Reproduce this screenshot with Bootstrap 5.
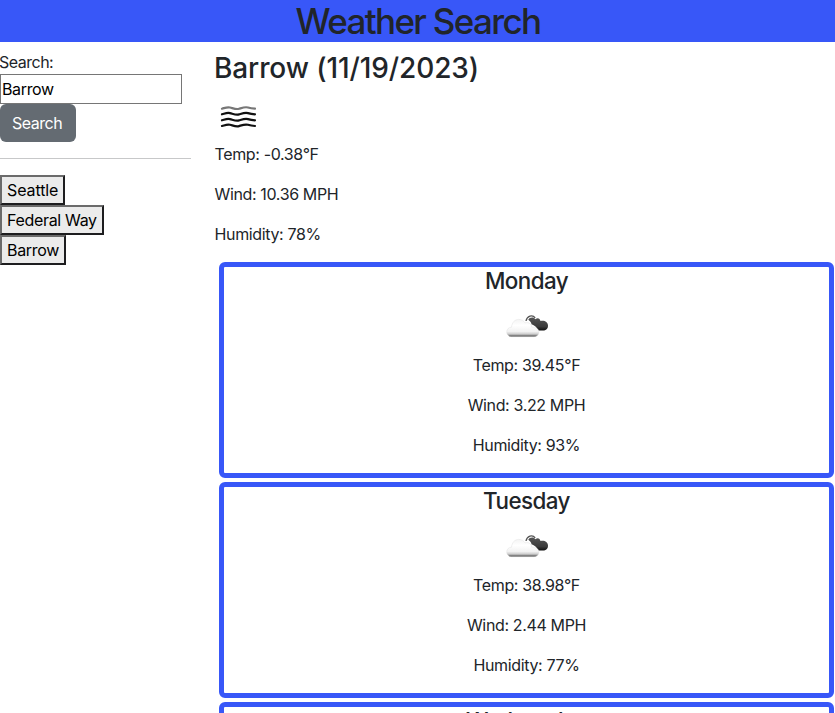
<!DOCTYPE html>
<html lang="en">
<head>
<meta charset="utf-8">
<meta name="viewport" content="width=device-width, initial-scale=1">
<title>Weather Search</title>
<link href="https://cdn.jsdelivr.net/npm/bootstrap@5.3.0/dist/css/bootstrap.min.css" rel="stylesheet">
<style>
body{font-family:Inter,"Liberation Sans",sans-serif;letter-spacing:-.36px;height:713px}
.page-head{background:#3857f8;height:42px}
.page-head h1{font-size:35px;line-height:43px;letter-spacing:-1.65px;padding-left:1px}
.side-panel{width:191px}
.side-panel label{text-indent:-1px;letter-spacing:-.5px}
.search-box{width:182px;height:30px;border:1px solid #767676;padding:1px 2px 1px 1px;color:#000;letter-spacing:-.36px}
.btn-search{width:76px;height:38px;background:#646b72;color:#fff;letter-spacing:-.5px;padding:6px 13px 6px 11px}
.btn-search:hover{background:#565e64;color:#fff}
.side-panel hr{opacity:.25}
.city-btn{height:30px;border:2px solid;border-color:#6b6b6b #1d1d1f #1d1d1f #6b6b6b;background:#ebebeb;color:#000;padding:0 5px;letter-spacing:-.33px}
.city-btn.seattle{letter-spacing:-.1px}
.main-panel{margin-left:24px}
.main-panel h2{font-size:28px;line-height:36px;letter-spacing:-.1px;margin-bottom:6px;text-indent:-1px}
.now-icon{width:50px;height:50px}
.now-data p{text-indent:-.5px}
.day-card{border:5px solid #3857f8;border-radius:6px;height:216px;margin:0 1px 4px 4px}
.day-card h3{font-size:22.4px;line-height:27px;letter-spacing:-.55px}
.day-icon{width:50px;height:50px;margin-bottom:1px}
</style>
</head>
<body class="overflow-hidden">
<header class="page-head text-center"><h1 class="m-0 fw-medium">Weather Search</h1></header>
<div class="d-flex">
<aside class="side-panel flex-shrink-0 pt-2">
<form>
<label for="city" class="d-block">Search:</label>
<input id="city" class="search-box d-block" type="text" value="Barrow">
<button type="button" class="btn btn-search d-block">Search</button>
</form>
<hr class="my-3">
<div class="d-flex flex-column align-items-start">
<button class="city-btn seattle">Seattle</button>
<button class="city-btn">Federal Way</button>
<button class="city-btn">Barrow</button>
</div>
</aside>
<main class="main-panel flex-grow-1 pt-2">
<h2>Barrow (11/19/2023)</h2>
<svg class="now-icon d-block" viewBox="0 0 50 50" fill="none" stroke="#111" stroke-width="2.2" stroke-linecap="round">
<path stroke="#777" d="M7 16.7C10 15.9 12 14.8 15 15.5s6 2.2 9 1.3 6-2.2 9-1.3 4 1 7 1.2"/>
<path d="M7 22.3C10 21.5 12 20.4 15 21.1s6 2.2 9 1.3 6-2.2 9-1.3 4 1 7 1.2"/>
<path d="M7 28.3C10 27.5 12 26.4 15 27.1s6 2.2 9 1.3 6-2.2 9-1.3 4 1 7 1.2"/>
<path d="M7 34C10 33.2 12 32.1 15 32.8s6 2.2 9 1.3 6-2.2 9-1.3 4 1 7 1.2"/>
</svg>
<div class="now-data">
<p>Temp: -0.38°F</p>
<p>Wind: 10.36 MPH</p>
<p>Humidity: 78%</p>
</div>
<section class="day-card text-center">
<h3 class="mb-2">Monday</h3>
<svg class="day-icon d-block mx-auto" viewBox="0 0 50 50"><use href="#brokenClouds"/></svg>
<p>Temp: 39.45°F</p>
<p>Wind: 3.22 MPH</p>
<p>Humidity: 93%</p>
</section>
<section class="day-card text-center">
<h3 class="mb-2">Tuesday</h3>
<svg class="day-icon d-block mx-auto" viewBox="0 0 50 50"><use href="#brokenClouds"/></svg>
<p>Temp: 38.98°F</p>
<p>Wind: 2.44 MPH</p>
<p>Humidity: 77%</p>
</section>
<section class="day-card text-center">
<h3 class="mb-2">Wednesday</h3>
</section>
</main>
</div>
<svg class="position-absolute" width="0" height="0" aria-hidden="true">
<defs>
<linearGradient id="frontFill" x1="0" y1="0" x2="0" y2="1"><stop offset="0" stop-color="#f4f4f4"/><stop offset=".35" stop-color="#fff"/><stop offset=".7" stop-color="#f2f2f2"/><stop offset=".85" stop-color="#ccc"/><stop offset="1" stop-color="#444"/></linearGradient>
<linearGradient id="backFill" x1="0" y1="0" x2="0" y2="1"><stop offset="0" stop-color="#555"/><stop offset=".7" stop-color="#3b3b3b"/><stop offset="1" stop-color="#111"/></linearGradient>
<g id="brokenClouds" transform="translate(-.5 -.8)">
<path fill="none" stroke="#555" stroke-width="1.3" d="M24.5 19.8C25.5 14.6 31 13.2 33.7 16.6"/>
<path fill="url(#backFill)" d="M26.8 18.5C28 15.8 32.4 15.4 33.9 18c2-2 4.6-1 5.1 1.8 3.4-1.2 7.4.6 7.5 4.4.1 3.4-2 5-5 5h-5C35.5 26 33 24 30 23c0-2-1.7-3-3.2-4.5Z"/>
<path fill="url(#frontFill)" stroke="#dcdcdc" stroke-width=".4" d="M10 35.5c-3.2 0-4.8-2.2-4.8-4.7 0-3 2.2-4.7 4.8-4.8.5-4.5 3-7.8 7.2-7.8 3 0 5 1.2 6.4 3.5 3-1 6.5.6 6.5 4.2 4 0 7.3 1.6 7.3 4.8 0 2.9-2.1 4.8-5 4.8Z"/>
</g>
</defs>
</svg>
<script src="https://cdn.jsdelivr.net/npm/bootstrap@5.3.0/dist/js/bootstrap.bundle.min.js"></script>
</body>
</html>
